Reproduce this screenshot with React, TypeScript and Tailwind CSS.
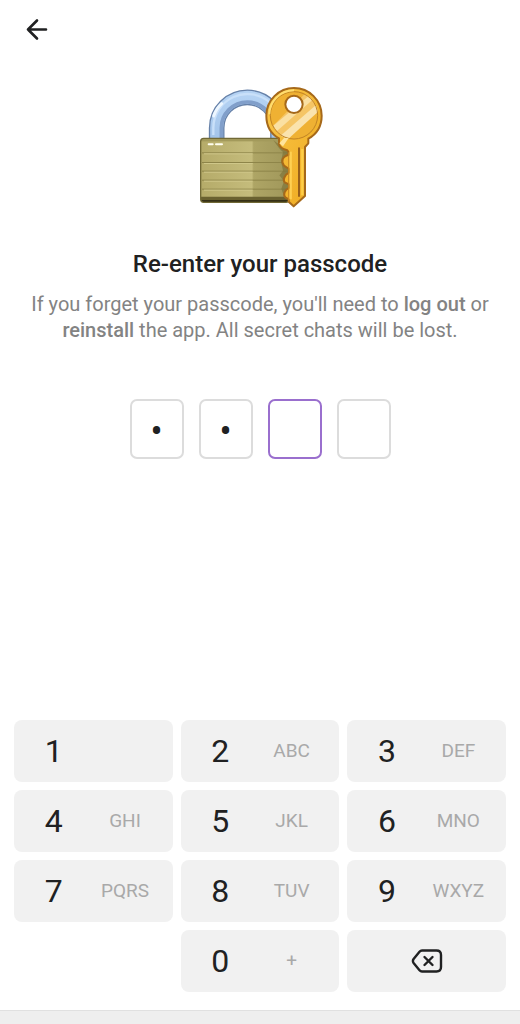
import { useState } from 'react'

const keys = [
  { digit: '1', letters: '' },
  { digit: '2', letters: 'ABC' },
  { digit: '3', letters: 'DEF' },
  { digit: '4', letters: 'GHI' },
  { digit: '5', letters: 'JKL' },
  { digit: '6', letters: 'MNO' },
  { digit: '7', letters: 'PQRS' },
  { digit: '8', letters: 'TUV' },
  { digit: '9', letters: 'WXYZ' },
  { digit: '0', letters: '+' },
]

function LockAndKey() {
  return (
    <svg viewBox="0 0 420 405" className="w-[140px] h-[135px]" aria-hidden="true">
      <defs>
        <linearGradient id="shackle" x1="0" y1="0" x2="0" y2="1">
          <stop offset="0" stopColor="#b4d2f3" />
          <stop offset="1" stopColor="#a3c4ea" />
        </linearGradient>
        <linearGradient id="gold" x1="0" y1="0" x2="1" y2="1">
          <stop offset="0" stopColor="#fbc84a" />
          <stop offset="1" stopColor="#eda81d" />
        </linearGradient>
        <linearGradient id="brass" x1="0" y1="0" x2="1" y2="0">
          <stop offset="0" stopColor="#b5ab69" />
          <stop offset="0.58" stopColor="#c5bc7c" />
          <stop offset="0.6" stopColor="#aea565" />
          <stop offset="1" stopColor="#a0975a" />
        </linearGradient>
        <clipPath id="lockBody">
          <rect x="32" y="175" width="265" height="192" rx="9" />
        </clipPath>
        <clipPath id="keyHead">
          <circle cx="312" cy="106" r="73" />
        </clipPath>
      </defs>

      {/* shackle */}
      <path d="M80 182V144A92 92 0 0 1 264 144V182" fill="none" stroke="#6681a8" strokeWidth="47" />
      <path d="M80 182V144A92 92 0 0 1 264 144V182" fill="none" stroke="url(#shackle)" strokeWidth="39" />
      <path d="M94 182V144A78 78 0 0 1 250 144" fill="none" stroke="#819fca" strokeWidth="11" />
      <path d="M70 165V144A102 102 0 0 1 240 68" fill="none" stroke="#c9e0f9" strokeWidth="7" />
      <path d="M71 108Q79 85 95 71" fill="none" stroke="#eef7ff" strokeWidth="9" strokeLinecap="round" />

      {/* body */}
      <g clipPath="url(#lockBody)">
        <rect x="32" y="175" width="265" height="192" fill="url(#brass)" />
        <rect x="32" y="175" width="265" height="9" fill="#a39a5b" />
        {[217, 246, 272, 299, 326].map((y) => (
          <g key={y}>
            <rect x="36" y={y} width="260" height="3" fill="#8e8549" />
            <rect x="42" y={y + 3} width="146" height="3" fill="#cfc789" />
          </g>
        ))}
        <path d="M32 350H297V368H32Z" fill="#6a6130" />
        <path d="M32 360H297V368H32Z" fill="#352f15" />
      </g>
      <path d="M250 180Q268 208 279 216L273 244L279 272L268 286L282 304L274 326L284 354H298V190H262Z" fill="#7d7238" opacity="0.65" />
      <rect x="32" y="175" width="265" height="192" rx="9" fill="none" stroke="#716936" strokeWidth="4" />
      <path d="M56 193H68M78 193H96" stroke="#fffef0" strokeWidth="6" strokeLinecap="round" />

      {/* key */}
      <path
        d="M312 24C266 24 229 61 229 107C229 137 244 162 267 175V191Q268 205 292 211L296 217V224C277 229 272 244 282 257L297 267V278C283 285 278 300 284 307L298 314V323C283 330 279 344 286 352L296 358V365L311 379L345 348V201L355 190V176C380 162 395 137 395 107C395 61 358 24 312 24Z"
        fill="url(#gold)"
        stroke="#a6691a"
        strokeWidth="6"
        strokeLinejoin="round"
      />
      <circle cx="312" cy="106" r="73" fill="#efb133" />
      <g clipPath="url(#keyHead)">
        <path d="M243 143L350 36L390 65L276 180Z" fill="#f5c565" />
        <path d="M250 137L355 49L367 60L261 153Z" fill="#fae0a2" />
        <path d="M270 169L379 74L386 94L292 179Z" fill="#fae3ad" />
      </g>
      <circle cx="312" cy="106" r="71" fill="none" stroke="#c18424" strokeWidth="3" />
      <path d="M238 103C239 63 272 31 312 31" fill="none" stroke="#ffdd70" strokeWidth="6" />
      <circle cx="312" cy="73" r="26" fill="#fff" stroke="#a6691a" strokeWidth="6" />
      <path d="M268 190L282 174H296L279 199Z" fill="#ffe49c" />
      <path d="M302 215V358" stroke="#ffd052" strokeWidth="7" />
      <path d="M327 205V348" stroke="#98601a" strokeWidth="6" strokeLinecap="round" />
      <path d="M337 207V346" stroke="#ffce47" strokeWidth="7" />
      <path d="M296 217V365" stroke="#c98922" strokeWidth="3" />
    </svg>
  )
}

export default function App() {
  const [code, setCode] = useState('25')

  const press = (digit: string) => setCode((c) => (c.length < 4 ? c + digit : c))

  return (
    <div className="min-h-screen flex flex-col bg-white text-[#202122] font-['Roboto',sans-serif]">
      <header className="px-6 pt-4">
        <button type="button" aria-label="Back" className="block">
          <svg viewBox="0 0 26 26" className="w-[26px] h-[26px]" fill="none" stroke="currentColor" strokeWidth="2.6" strokeLinecap="round" strokeLinejoin="round" aria-hidden="true">
            <path d="M22 13.5H4M13 4.5L4 13.5L13 22.5" />
          </svg>
        </button>
      </header>

      <main className="flex-1 flex flex-col items-center px-6 pt-[38px]">
        <LockAndKey />
        <h1 className="mt-[33px] text-[24px] leading-8 font-medium text-center">Re-enter your passcode</h1>
        <p className="mt-[11px] max-w-[460px] text-[20px] leading-[26px] text-center text-[#838383]">
          If you forget your passcode, you'll need to <strong className="font-medium">log out</strong> or{' '}
          <strong className="font-medium">reinstall</strong> the app. All secret chats will be lost.
        </p>
        <div className="mt-14 flex gap-[15px]">
          {[0, 1, 2, 3].map((i) => (
            <input
              key={i}
              type="password"
              readOnly
              aria-label={`Passcode digit ${i + 1}`}
              value={code[i] ?? ''}
              className={`w-[54px] h-[60px] pt-1.5 rounded-[7px] border-2 bg-white text-center text-[36px] outline-none ${
                i === code.length ? 'border-[#9a6fce]' : 'border-[#dcdcdc]'
              }`}
            />
          ))}
        </div>
      </main>

      <div className="grid grid-cols-3 gap-2 px-[14px] pb-[18px]">
        {keys.map(({ digit, letters }) => (
          <button
            key={digit}
            type="button"
            onClick={() => press(digit)}
            className={`h-[62px] flex items-center rounded-lg bg-[#f1f1f1] ${digit === '0' ? 'col-start-2' : ''}`}
          >
            <span className="w-1/2 text-[32px] leading-10 text-center">{digit}</span>
            <span className="w-1/2 pr-4 text-[19px] leading-6 text-center text-[#a9a9a9]">{letters}</span>
          </button>
        ))}
        <button
          type="button"
          aria-label="Delete"
          onClick={() => setCode((c) => c.slice(0, -1))}
          className="h-[62px] flex items-center justify-center rounded-lg bg-[#f1f1f1]"
        >
          <svg viewBox="0 0 32 26" className="w-8 h-[26px]" fill="none" stroke="currentColor" strokeWidth="2.4" strokeLinecap="round" strokeLinejoin="round" aria-hidden="true">
            <path d="M11 2.5H25.5Q30 2.5 30 7V19Q30 23.5 25.5 23.5H11Q9.5 23.5 8.5 22.3L2.6 15Q1.2 13 2.6 11L8.5 3.7Q9.5 2.5 11 2.5Z" />
            <path d="M13.5 9L21.5 17M21.5 9L13.5 17" />
          </svg>
        </button>
      </div>

      <footer className="h-[14px] border-t border-[#e0e0e0] bg-[#eeeeee]" />
    </div>
  )
}
